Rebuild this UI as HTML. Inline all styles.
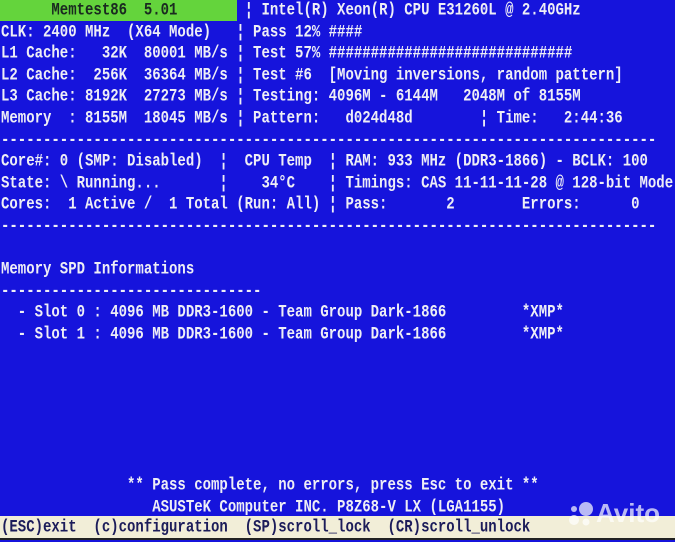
<!DOCTYPE html>
<html><head><meta charset="utf-8"><style>
html,body{margin:0;padding:0}
body{width:675px;height:540px;background:#1614dc;position:relative;overflow:hidden;font-family:"Liberation Mono",monospace;font-weight:bold;font-size:14px;color:#eeeef6}
.r{position:absolute;left:1px;height:21.6px;line-height:21.6px;white-space:pre;transform:scaleY(1.25);transform-origin:0 50%}
#w{position:absolute;left:0;top:1px;width:675px;height:540px}
#g{position:absolute;left:0;top:0;width:237px;height:21px;background:#64d43c}
#b{position:absolute;left:0;top:516px;width:675px;height:22px;background:#f2eed8}
#d{position:absolute;left:0;top:538px;width:675px;height:2px;background:#222}
</style></head><body>
<div id="g"></div><div id="b"></div><div id="d"></div>
<div id="w">
<div class="r" style="top:0px"><span style="color:#1a2a20">      Memtest86  5.01        </span>¦ Intel(R) Xeon(R) CPU E31260L @ 2.40GHz</div>
<div class="r" style="top:21.6px">CLK: 2400 MHz  (X64 Mode)   ¦ Pass 12% ####</div>
<div class="r" style="top:43.2px">L1 Cache:   32K  80001 MB/s ¦ Test 57% #############################</div>
<div class="r" style="top:64.8px">L2 Cache:  256K  36364 MB/s ¦ Test #6  [Moving inversions, random pattern]</div>
<div class="r" style="top:86.4px">L3 Cache: 8192K  27273 MB/s ¦ Testing: 4096M - 6144M   2048M of 8155M</div>
<div class="r" style="top:108px">Memory  : 8155M  18045 MB/s ¦ Pattern:   d024d48d        ¦ Time:   2:44:36</div>
<div class="r" style="top:129.6px">------------------------------------------------------------------------------</div>
<div class="r" style="top:151.2px">Core#: 0 (SMP: Disabled)  ¦  CPU Temp  ¦ RAM: 933 MHz (DDR3-1866) - BCLK: 100</div>
<div class="r" style="top:172.8px">State: \ Running...       ¦    34°C    ¦ Timings: CAS 11-11-11-28 @ 128-bit Mode</div>
<div class="r" style="top:194.4px">Cores:  1 Active /  1 Total (Run: All) ¦ Pass:       2        Errors:      0</div>
<div class="r" style="top:216px">------------------------------------------------------------------------------</div>
<div class="r" style="top:259.2px">Memory SPD Informations</div>
<div class="r" style="top:280.8px">-------------------------------</div>
<div class="r" style="top:302.4px">  - Slot 0 : 4096 MB DDR3-1600 - Team Group Dark-1866         *XMP*</div>
<div class="r" style="top:324px">  - Slot 1 : 4096 MB DDR3-1600 - Team Group Dark-1866         *XMP*</div>
<div class="r" style="top:475.2px">               ** Pass complete, no errors, press Esc to exit **</div>
<div class="r" style="top:496.8px">                  ASUSTeK Computer INC. P8Z68-V LX (LGA1155)</div>
</div>
<div class="r" style="top:518px;color:#1c1c5a">(ESC)exit  (c)configuration  (SP)scroll_lock  (CR)scroll_unlock</div>
<svg style="position:absolute;left:566px;top:500px" width="30" height="30"><g fill="rgba(255,255,255,0.7)"><circle cx="20" cy="9" r="7"/><circle cx="8" cy="20" r="5"/><circle cx="20" cy="22" r="3.5"/><circle cx="8" cy="9" r="3"/></g></svg>
<div style="position:absolute;left:596px;top:498px;font-family:'Liberation Sans',sans-serif;font-size:26px;font-weight:bold;color:rgba(255,255,255,0.7)">Avito</div>
</body></html>
